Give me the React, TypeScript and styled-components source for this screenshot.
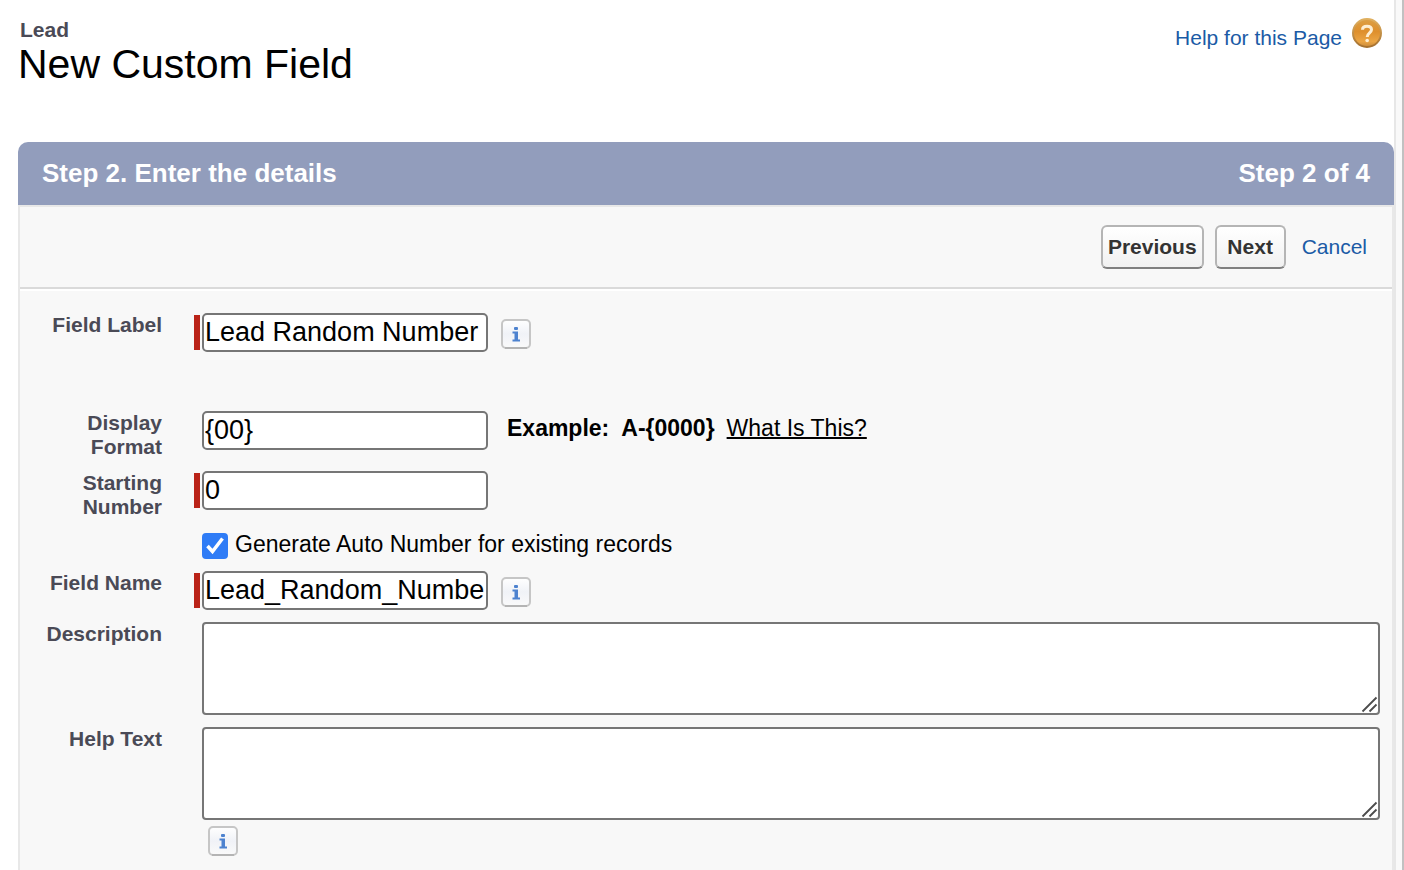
import React from "react";
import styled, { createGlobalStyle } from "styled-components";

const GlobalStyle = createGlobalStyle`
  * { box-sizing: border-box; }
  body {
    margin: 0;
    background: #fff;
    color: #000;
    font-family: "Liberation Sans", Arial, Helvetica, sans-serif;
    font-size: 23px;
    line-height: 28px;
  }
`;

const Page = styled.div`
  display: flex;
  min-height: 100vh;
  background: #f9f9f9;
  border-right: 2px solid #c1c1c1;
  padding-right: 6px;
`;

const Content = styled.main`
  flex: 1;
  min-width: 0;
  display: flex;
  flex-direction: column;
  background: #fff;
  border-right: 2px solid #e7e7e7;
  padding: 18px 0 0 18px;
`;

const PageHeader = styled.header`
  display: flex;
  justify-content: space-between;
  align-items: flex-start;
  height: 124px;
  padding-right: 12px;
`;

const Kicker = styled.p`
  margin: 0;
  padding-left: 2px;
  font-size: 21px;
  line-height: 24px;
  font-weight: bold;
  color: #4a4a56;
`;

const Title = styled.h1`
  margin: 0;
  font-size: 41px;
  line-height: 44px;
  font-weight: normal;
`;

const Link = styled.a`
  color: #1b5ba6;
  font-size: 21px;
  line-height: 24px;
  text-decoration: none;
`;

const HelpLink = styled(Link)`
  display: flex;
  align-items: flex-start;
  gap: 10px;
  svg { display: block; }
`;

const HelpText = styled.span`
  line-height: 40px;
`;

const Panel = styled.section`
  flex: 1;
`;

const PanelHead = styled.div`
  display: flex;
  justify-content: space-between;
  align-items: flex-start;
  height: 63px;
  padding: 15px 24px 0;
  border-radius: 10px 10px 0 0;
  background: #929dbc;
  color: #fff;
`;

const StepTitle = styled.h2`
  margin: 0;
  font-size: 26px;
  line-height: 32px;
  font-weight: bold;
`;

const PanelBody = styled.form`
  min-height: calc(100% - 63px);
  background: #f8f8f8;
  border: 2px solid #e8e8e8;
  border-bottom: 0;
`;

const Actions = styled.div`
  display: flex;
  justify-content: flex-end;
  align-items: center;
  height: 82px;
  padding-right: 25px;
  border-bottom: 2px solid #dadada;
`;

const Button = styled.button`
  height: 44px;
  min-width: 71px;
  margin-right: 11px;
  padding: 0 5px;
  border: 2px solid #b5b5b5;
  border-bottom-color: #7f7f7f;
  border-radius: 6px;
  background: linear-gradient(#fff, #f1f1f1);
  color: #333;
  font: bold 21px/24px "Liberation Sans", Arial, sans-serif;
`;

const CancelLink = styled(Link)`
  margin-left: 5px;
`;

const Fields = styled.div`
  display: flex;
  flex-direction: column;
  gap: 12px;
  padding: 22px 12px 14px 0;
  border-top: 2px solid #fff;
`;

const Row = styled.div<{ $spaced?: boolean }>`
  display: grid;
  grid-template-columns: 142px minmax(0, 1fr);
  column-gap: 32px;
  align-items: start;
  margin-bottom: ${(p) => (p.$spaced ? 47 : 0)}px;
`;

const Label = styled.label`
  padding-left: 24px;
  text-align: right;
  font-size: 21px;
  line-height: 24px;
  font-weight: bold;
  color: #4a4a56;
`;

const Control = styled.div`
  display: flex;
  align-items: center;
`;

const Marker = styled.span<{ $required?: boolean }>`
  flex: none;
  width: 6px;
  height: 35px;
  margin-right: 2px;
  background: ${(p) => (p.$required ? "#ba2318" : "transparent")};
`;

const TextInput = styled.input`
  width: 286px;
  height: 39px;
  padding: 0 2px 0 1px;
  border: 2px solid #767676;
  border-radius: 5px;
  background: #fff;
  color: #000;
  font: 27px/32px "Liberation Sans", Arial, sans-serif;
`;

const InfoButton = styled.button`
  display: block;
  padding: 0;
  border: 0;
  background: none;
  svg { display: block; }
`;

const InlineInfo = styled(InfoButton)`
  margin: 2px 0 0 13px;
`;

const Example = styled.p`
  display: flex;
  gap: 12px;
  margin: 0 0 6px 19px;
`;

const ExampleLink = styled.a`
  color: #000;
  text-decoration-thickness: 2px;
`;

const CheckRow = styled.label`
  display: flex;
  align-items: flex-start;
  gap: 7px;
  height: 28px;
  margin-left: 8px;
  line-height: 26px;
`;

const Checkbox = styled.span`
  position: relative;
  width: 26px;
  height: 26px;
  margin-top: 2px;
  input {
    display: block;
    appearance: none;
    width: 26px;
    height: 26px;
    margin: 0;
    border: 2px solid #767676;
    border-radius: 4px;
    background: #fff;
  }
  input:checked { border-color: #2f7cf6; background: #2f7cf6; }
  svg { position: absolute; inset: 0; pointer-events: none; }
`;

const AreaWrap = styled.div`
  position: relative;
  margin-left: 8px;
  svg { position: absolute; right: 2px; bottom: 2px; pointer-events: none; }
`;

const TextArea = styled.textarea`
  display: block;
  width: 100%;
  height: 93px;
  padding: 4px;
  border: 2px solid #767676;
  border-radius: 4px;
  background: #fff;
  resize: none;
  font: 23px/28px "Liberation Sans", Arial, sans-serif;
`;

const BelowInfo = styled(InfoButton)`
  margin: 6px 0 0 14px;
`;

function HelpIcon() {
  return (
    <svg width="30" height="30" viewBox="0 0 30 30" aria-hidden="true">
      <defs>
        <linearGradient id="helpFill" x1="0" y1="0" x2="0" y2="1">
          <stop offset="0" stopColor="#dca046" />
          <stop offset="0.45" stopColor="#de8f2c" />
          <stop offset="0.8" stopColor="#eba544" />
          <stop offset="1" stopColor="#c98a3c" />
        </linearGradient>
        <linearGradient id="helpRim" x1="0" y1="0" x2="0" y2="1">
          <stop offset="0" stopColor="#e0b060" />
          <stop offset="1" stopColor="#a5702f" />
        </linearGradient>
      </defs>
      <circle cx="15" cy="15" r="14" fill="url(#helpFill)" stroke="url(#helpRim)" strokeWidth="2" />
      <path
        d="M10.5 11.8 C10.5 9.5 12.3 8.2 15 8.2 C17.7 8.2 19.5 9.6 19.5 11.8 C19.5 14.8 15.2 15 15.2 19"
        fill="none"
        stroke="#fdeed2"
        strokeWidth="3"
      />
      <circle cx="15.2" cy="22.500" r="1.800" fill="#fdeed2" />
    </svg>
  );
}

function InfoIcon() {
  return (
    <svg width="30" height="30" viewBox="0 0 30 30" aria-hidden="true">
      <defs>
        <linearGradient id="infoFill" x1="0" y1="0" x2="0" y2="1">
          <stop offset="0" stopColor="#fff" />
          <stop offset="0.5" stopColor="#f0f2f7" />
          <stop offset="1" stopColor="#fafafa" />
        </linearGradient>
      </defs>
      <rect x="1" y="1" width="28" height="28" rx="4" fill="url(#infoFill)" stroke="#c6c6c6" strokeWidth="2" />
      <path d="M4 29H26" stroke="#b4b4b4" strokeWidth="2" />
      <rect x="13" y="8" width="4" height="3" rx="1" fill="#4d82cf" />
      <path d="M11.5 12.500H17V20.500H19V22.500H11.500V20.500H13.500V14.500H11.500Z" fill="#4d82cf" />
    </svg>
  );
}

function Grip() {
  return (
    <svg width="18" height="18" viewBox="0 0 18 18" aria-hidden="true">
      <path d="M2.500 16.500L16.500 2.500M9.500 16.500L16.500 9.500" stroke="#4c4c4c" strokeWidth="1.800" fill="none" />
    </svg>
  );
}

export default function App() {
  return (
    <>
      <GlobalStyle />
      <Page>
        <Content>
          <PageHeader>
            <div>
              <Kicker>Lead</Kicker>
              <Title>New Custom Field</Title>
            </div>
            <HelpLink href="#help">
              <HelpText>Help for this Page</HelpText>
              <HelpIcon />
            </HelpLink>
          </PageHeader>
          <Panel>
            <PanelHead>
              <StepTitle>Step 2. Enter the details</StepTitle>
              <StepTitle as="span">Step 2 of 4</StepTitle>
            </PanelHead>
            <PanelBody>
              <Actions>
                <Button type="button">Previous</Button>
                <Button type="button">Next</Button>
                <CancelLink href="#cancel">Cancel</CancelLink>
              </Actions>
              <Fields>
                <Row $spaced>
                  <Label htmlFor="fieldLabel">Field Label</Label>
                  <Control>
                    <Marker $required />
                    <TextInput id="fieldLabel" defaultValue="Lead Random Number" />
                    <InlineInfo type="button" aria-label="Field Label help"><InfoIcon /></InlineInfo>
                  </Control>
                </Row>
                <Row>
                  <Label htmlFor="displayFormat">Display Format</Label>
                  <Control>
                    <Marker />
                    <TextInput id="displayFormat" defaultValue="{00}" />
                    <Example>
                      <b>Example:</b>
                      <b>{"A-{0000}"}</b>
                      <ExampleLink href="#format">What Is This?</ExampleLink>
                    </Example>
                  </Control>
                </Row>
                <Row>
                  <Label htmlFor="startingNumber">Starting Number</Label>
                  <Control>
                    <Marker $required />
                    <TextInput id="startingNumber" defaultValue="0" />
                  </Control>
                </Row>
                <Row>
                  <span />
                  <CheckRow>
                    <Checkbox>
                      <input type="checkbox" defaultChecked />
                      <svg width="26" height="26" viewBox="0 0 26 26" aria-hidden="true">
                        <path d="M5.500 13L10.500 18.500L20.500 5.500" fill="none" stroke="#fff" strokeWidth="3.500" />
                      </svg>
                    </Checkbox>
                    <span>Generate Auto Number for existing records</span>
                  </CheckRow>
                </Row>
                <Row>
                  <Label htmlFor="fieldName">Field Name</Label>
                  <Control>
                    <Marker $required />
                    <TextInput id="fieldName" defaultValue="Lead_Random_Number" />
                    <InlineInfo type="button" aria-label="Field Name help"><InfoIcon /></InlineInfo>
                  </Control>
                </Row>
                <Row>
                  <Label htmlFor="description">Description</Label>
                  <AreaWrap>
                    <TextArea id="description" />
                    <Grip />
                  </AreaWrap>
                </Row>
                <Row>
                  <Label htmlFor="helpText">Help Text</Label>
                  <div>
                    <AreaWrap>
                      <TextArea id="helpText" />
                      <Grip />
                    </AreaWrap>
                    <BelowInfo type="button" aria-label="Help Text help"><InfoIcon /></BelowInfo>
                  </div>
                </Row>
              </Fields>
            </PanelBody>
          </Panel>
        </Content>
      </Page>
    </>
  );
}
